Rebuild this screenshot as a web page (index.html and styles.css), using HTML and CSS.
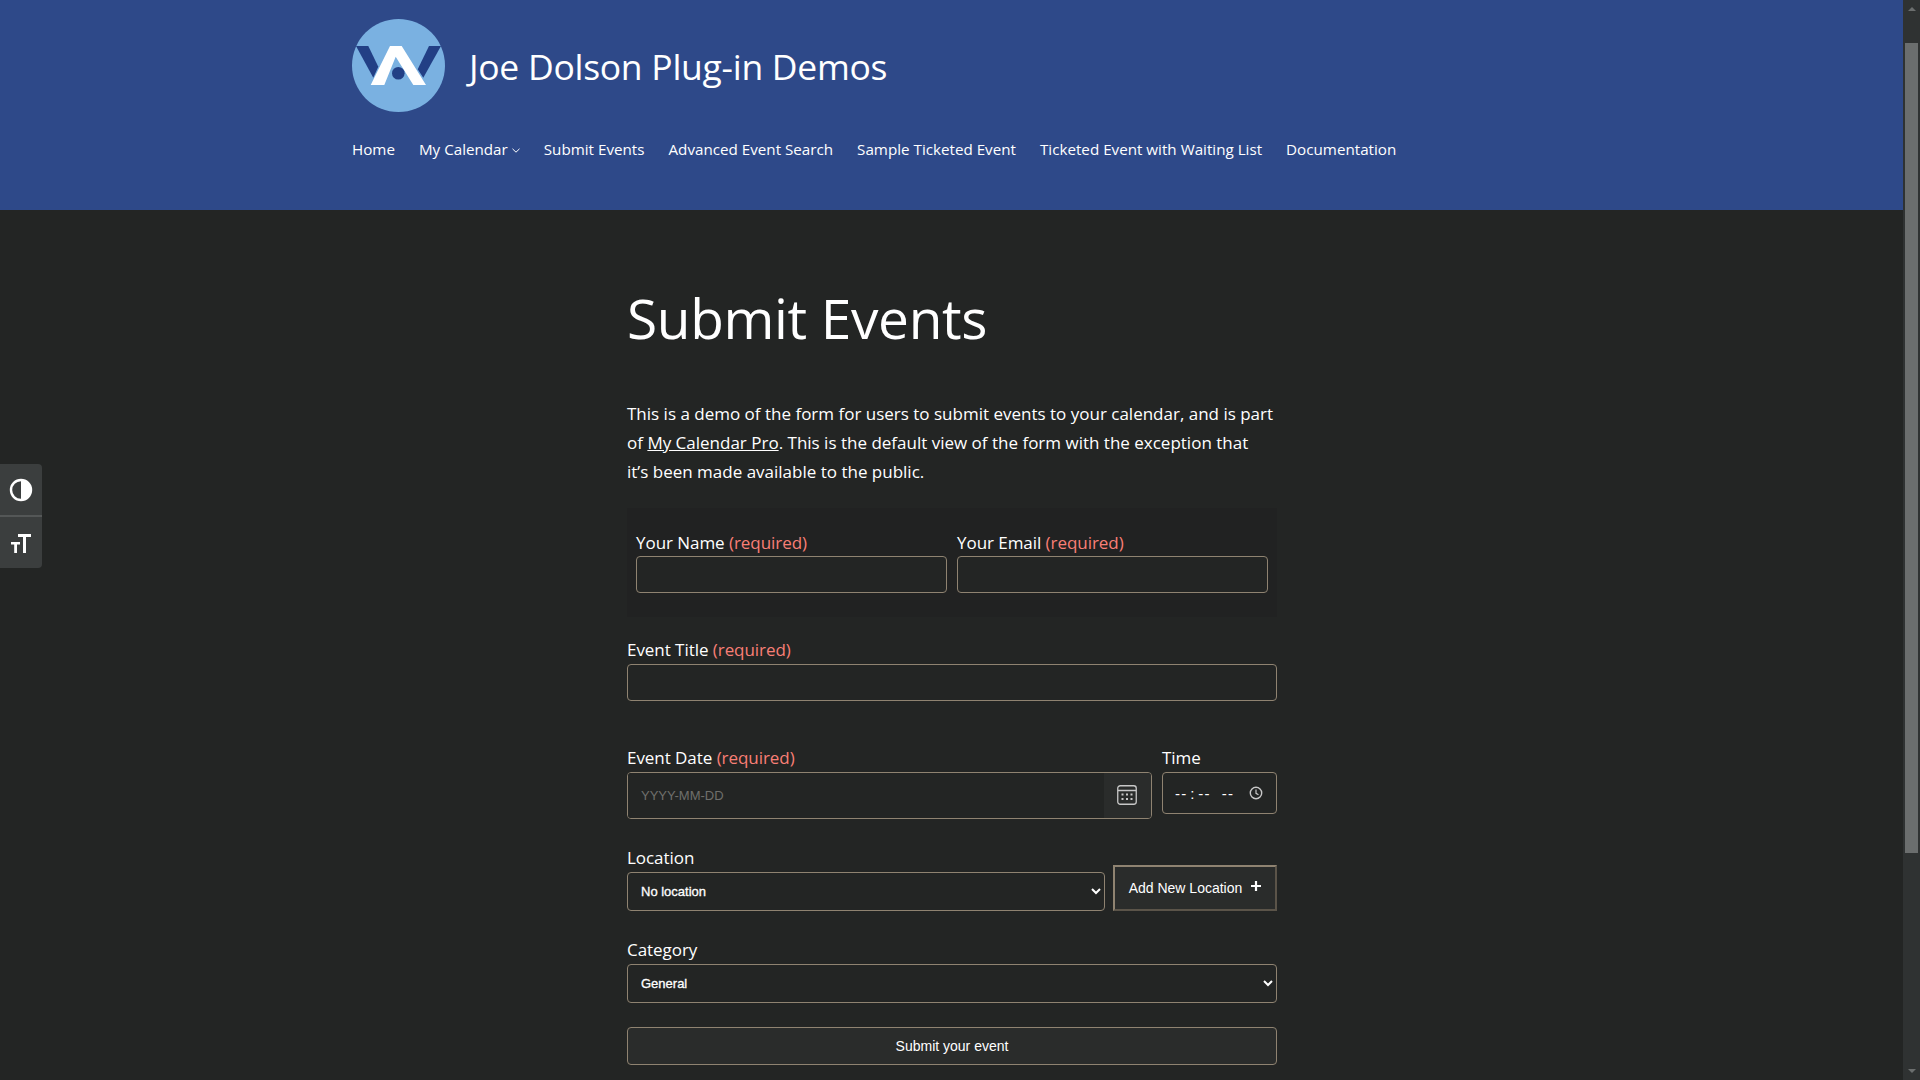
FILE: index.html
```html
<!DOCTYPE html>
<html lang="en">
<head>
    <meta charset="UTF-8">
    <meta name="viewport" content="width=device-width, initial-scale=1.0">
    <title>Submit Events - Joe Dolson Plug-in Demos</title>
    <link rel="stylesheet" href="styles.css">
</head>
<body>

<div class="page">
    <div class="main">
        <header class="site-header">
            <div class="branding">
                <svg class="logo" viewBox="0 0 93 93" aria-hidden="true">
                    <circle cx="46.5" cy="46.5" r="46.5" fill="#7AB1E1"/>
                    <polygon points="4,27 16.3,27 26.3,47.7 21.3,58.7" fill="#223F85"/>
                    <polygon points="89,27 77,27 65.7,50.3 71.3,58.7" fill="#223F85"/>
                    <polygon points="38,27 49.7,27 74,66 61.3,66 43.7,37.7 32.3,66 18.7,66" fill="#FFFFFF"/>
                    <circle cx="46.3" cy="54.3" r="6.3" fill="#223F85"/>
                </svg>
                <a class="site-title" href="#">Joe Dolson Plug-in Demos</a>
            </div>
            <nav class="site-nav">
                <a href="#">Home</a>
                <a href="#">My Calendar<svg class="caret" viewBox="0 0 8 5" aria-hidden="true"><path d="M.5 .8L4 4.200 7.500 .8" fill="none" stroke="#fff" stroke-width="1"/></svg></a>
                <a href="#">Submit Events</a>
                <a href="#">Advanced Event Search</a>
                <a href="#">Sample Ticketed Event</a>
                <a href="#">Ticketed Event with Waiting List</a>
                <a href="#">Documentation</a>
            </nav>
        </header>

        <main class="content">
            <h1>Submit Events</h1>
            <p class="intro">This is a demo of the form for users to submit events to your calendar, and is part of <a href="#">My Calendar Pro</a>. This is the default view of the form with the exception that it’s&nbsp;been made available to the public.</p>

            <form class="event-form">
                <div class="contact-box">
                    <div class="field">
                        <label for="yourName">Your Name <span class="req">(required)</span></label>
                        <input type="text" id="yourName">
                    </div>
                    <div class="field">
                        <label for="yourEmail">Your Email <span class="req">(required)</span></label>
                        <input type="email" id="yourEmail">
                    </div>
                </div>

                <div class="field title-field">
                    <label for="eventTitle">Event Title <span class="req">(required)</span></label>
                    <input type="text" id="eventTitle">
                </div>

                <div class="date-row">
                    <div class="field date-field">
                        <label for="eventDate">Event Date <span class="req">(required)</span></label>
                        <div class="date-picker">
                            <input type="text" id="eventDate" placeholder="YYYY-MM-DD">
                            <button type="button" class="date-btn" aria-label="Choose date">
                                <svg viewBox="0 0 20 20" aria-hidden="true">
                                    <rect x="0.75" y="0.75" width="18.5" height="18.5" rx="2.5" fill="none" stroke="#C8C8C8" stroke-width="1.3"/>
                                    <path d="M1 5.5h18" stroke="#C8C8C8" stroke-width="1.3"/>
                                    <g fill="#C8C8C8">
                                        <rect x="4.5" y="8.5" width="2" height="2"/><rect x="9" y="8.5" width="2" height="2"/><rect x="13.5" y="8.5" width="2" height="2"/>
                                        <rect x="4.5" y="13" width="2" height="2"/><rect x="9" y="13" width="2" height="2"/><rect x="13.5" y="13" width="2" height="2"/>
                                    </g>
                                </svg>
                            </button>
                        </div>
                    </div>
                    <div class="field time-field">
                        <label for="eventTime">Time</label>
                        <div class="time-picker">
                            <input type="text" id="eventTime" placeholder="--&#8202;:&#8202;--&nbsp;&nbsp;--">
                            <svg viewBox="0 0 14 14" aria-hidden="true">
                                <circle cx="7" cy="7" r="5.7" fill="none" stroke="#C8C8C8" stroke-width="1.4"/>
                                <path d="M7 3.500V7.300L9.500 8.800" fill="none" stroke="#C8C8C8" stroke-width="1.2"/>
                            </svg>
                        </div>
                    </div>
                </div>

                <div class="location-row">
                    <div class="field location-field">
                        <label for="eventLocation">Location</label>
                        <select id="eventLocation"><option>No location</option></select>
                    </div>
                    <button type="button" class="add-location">Add New Location<svg viewBox="0 0 10 10" aria-hidden="true"><path d="M5 0v10M0 5h10" stroke="#fff" stroke-width="2.2"/></svg></button>
                </div>

                <div class="field category-field">
                    <label for="eventCategory">Category</label>
                    <select id="eventCategory"><option>General</option></select>
                </div>

                <button type="submit" class="submit-btn">Submit your event</button>
            </form>
        </main>
    </div>

    <div class="scrollbar" aria-hidden="true">
        <span class="arrow-up"></span>
        <span class="thumb"></span>
        <span class="arrow-down"></span>
    </div>
</div>

<div class="a11y-toolbar">
    <button type="button" aria-label="Toggle high contrast">
        <svg viewBox="0 0 24 24" aria-hidden="true">
            <circle cx="12" cy="12" r="10" fill="none" stroke="#fff" stroke-width="2.4"/>
            <path d="M12 2a10 10 0 0 1 0 20z" fill="#fff"/>
        </svg>
    </button>
    <button type="button" aria-label="Toggle font size">
        <svg viewBox="0 0 24 24" aria-hidden="true">
            <path d="M9 3h13v3h-5v16h-3V6H9zM2 11h9v2.6H8V22H5.200v-8.400H2z" fill="#fff"/>
        </svg>
    </button>
</div>

</body>
</html>
```
FILE: styles.css
```css
* {
    box-sizing: border-box;
}
html, body {
    margin: 0;
    padding: 0;
    height: 100%;
    overflow: hidden;
}
body {
    font-family: 'Open Sans', 'Noto Sans', sans-serif;
    background-color: #232524;
    color: #ffffff;
    color-scheme: dark;
}
a {
    color: #ffffff;
}
.page {
    display: flex;
    height: 100vh;
}
.main {
    flex: 1;
    min-width: 0;
    overflow: hidden;
}
.site-header {
    height: 210px;
    background-color: #2E4989;
    padding: 19px 0 0 352px;
}
.branding {
    display: flex;
    align-items: center;
    gap: 24px;
}
.logo {
    width: 93px;
    height: 93px;
    flex: none;
}
.site-title {
    font-size: 35.5px;
    text-decoration: none;
    letter-spacing: -0.28px;
    margin-top: 1px;
}
.site-nav {
    display: flex;
    gap: 24px;
    margin-top: 25px;
    font-size: 15.2px;
    line-height: 24px;
}
.site-nav a {
    text-decoration: none;
}
.caret {
    width: 8px;
    height: 5px;
    margin-left: 4px;
    vertical-align: 2px;
}
.content {
    width: 650px;
    margin-left: 627px;
}
h1 {
    font-size: 55px;
    font-weight: 400;
    line-height: 70px;
    letter-spacing: -0.35px;
    margin: 73px 0 0;
}
.intro {
    font-size: 17px;
    line-height: 29px;
    margin: 46px 0 0;
}
.event-form {
    margin-top: 22px;
}
.contact-box {
    display: flex;
    gap: 10px;
    height: 109px;
    padding: 24px 9px 0;
    background-color: #212222;
}
.field {
    display: flex;
    flex-direction: column;
}
.contact-box .field {
    flex: 1;
}
label {
    font-size: 17px;
    line-height: 20px;
    margin-bottom: 4px;
    letter-spacing: -0.05px;
}
.contact-box label {
    line-height: 22px;
    margin-bottom: 2px;
}
.req {
    color: #F97F76;
}
input, select {
    border: 1px solid #8F8371;
    border-radius: 4px;
    background-color: #232524;
    color: #ffffff;
    height: 37px;
    width: 100%;
}
.title-field {
    margin-top: 23px;
}
.date-row {
    display: flex;
    gap: 10px;
    margin-top: 47px;
}
.date-field {
    flex: 1;
}
.date-picker {
    display: flex;
    height: 47px;
    border: 1px solid #8F8371;
    border-radius: 4px;
    overflow: hidden;
}
.date-picker input {
    flex: 1;
    height: 100%;
    border: 0;
    border-radius: 0;
    padding: 0 13px;
    font-family: 'Liberation Sans', sans-serif;
    font-size: 13px;
}
.date-picker input::placeholder {
    color: #6F6F6B;
}
.date-btn {
    width: 47px;
    border: 0;
    padding: 0;
    background-color: #2A2C2B;
    display: flex;
    align-items: center;
    justify-content: center;
}
.date-btn svg {
    width: 20px;
    height: 20px;
    margin: -2px 2px 0 0;
}
.time-field {
    width: 115px;
}
.time-picker {
    display: flex;
    align-items: center;
    height: 42px;
    padding: 0 13px 0 12px;
    border: 1px solid #8F8371;
    border-radius: 4px;
}
.time-picker input {
    flex: 1;
    min-width: 0;
    height: 100%;
    border: 0;
    padding: 0;
    background: none;
    font-family: 'Liberation Sans', sans-serif;
    font-size: 15px;
    letter-spacing: 1.3px;
}
.time-picker input::placeholder {
    color: #ffffff;
    opacity: 1;
}
.time-picker svg {
    width: 14px;
    height: 14px;
    flex: none;
}
.location-row {
    display: flex;
    align-items: flex-end;
    gap: 8px;
    margin-top: 29px;
}
.location-field {
    flex: 1;
}
select {
    height: 39px;
    padding: 0 9px;
    font-family: 'Liberation Sans', sans-serif;
    font-size: 13px;
    -webkit-text-stroke: 0.3px #ffffff;
}
.add-location {
    width: 164px;
    height: 46px;
    border: 2px solid;
    border-color: #8F8371 #5B5449 #5B5449 #8F8371;
    background-color: #2A2C2B;
    color: #ffffff;
    font-family: 'Liberation Sans', sans-serif;
    font-size: 14px;
    display: flex;
    align-items: center;
    justify-content: center;
    gap: 9px;
}
.add-location svg {
    width: 10px;
    height: 10px;
    margin-top: -4px;
}
.category-field {
    margin-top: 29px;
}
.submit-btn {
    display: block;
    width: 100%;
    height: 38px;
    margin-top: 24px;
    border: 1px solid #8F8371;
    border-radius: 4px;
    background-color: #2A2C2B;
    color: #ffffff;
    font-family: 'Liberation Sans', sans-serif;
    font-size: 14px;
}
.scrollbar {
    width: 17px;
    flex: none;
    display: flex;
    flex-direction: column;
    align-items: center;
    background-color: #2F3232;
}
.arrow-up, .arrow-down {
    width: 0;
    height: 0;
    border-left: 4px solid transparent;
    border-right: 4px solid transparent;
}
.arrow-up {
    margin-top: 7px;
    border-bottom: 4px solid #6B6E6E;
}
.thumb {
    width: 13px;
    height: 810px;
    margin-top: 32px;
    background-color: #6B6E6E;
}
.arrow-down {
    margin-top: 216px;
    border-top: 4px solid #6B6E6E;
}
.a11y-toolbar {
    position: fixed;
    left: 0;
    top: 464px;
    width: 42px;
    height: 104px;
    display: flex;
    flex-direction: column;
    background-color: #3B3E3E;
    border-radius: 0 4px 4px 0;
}
.a11y-toolbar button {
    flex: 1;
    border: 0;
    padding: 0;
    background: none;
    display: flex;
    align-items: center;
    justify-content: center;
}
.a11y-toolbar button + button {
    border-top: 2px solid #545757;
}
.a11y-toolbar svg {
    width: 24px;
    height: 24px;
}
```
